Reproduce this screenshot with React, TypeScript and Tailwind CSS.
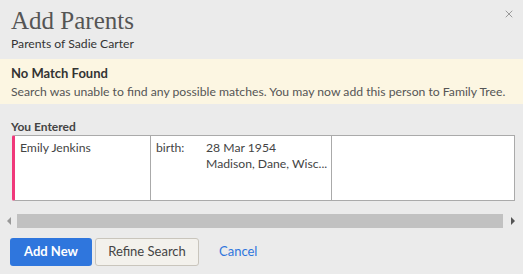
import { X } from 'lucide-react';

const sans = { fontFamily: 'Lato, "Liberation Sans", sans-serif' };

export default function App() {
  return (
    <div className="relative h-[274px] w-[523px] overflow-hidden bg-[#ebebeb] text-[#333]" style={sans}>
      {/* Header */}
      <div className="px-[11px] pt-[6px]">
        <h1 className="text-[25px] leading-[30px] text-[#555]" style={{ fontFamily: '"Liberation Serif", serif' }}>
          Add Parents
        </h1>
        <p className="text-[12.2px] leading-[15px] text-[#333]">Parents of Sadie Carter</p>
      </div>
      <button className="absolute right-[8px] top-[8px] text-[#999]" aria-label="Close">
        <X className="h-[12px] w-[12px]" strokeWidth={2} />
      </button>

      {/* No match banner */}
      <div className="mt-[8px] h-[45px] bg-[#fcf6e2] px-[11px] pt-[6px]">
        <div className="text-[13px] font-bold leading-[16px] text-[#333]">No Match Found</div>
        <div className="mt-[3px] text-[12.2px] leading-[15px] text-[#555]">
          Search was unable to find any possible matches. You may now add this person to Family Tree.
        </div>
      </div>

      {/* You entered */}
      <div className="mt-[15px] px-[11px] text-[12px] font-bold leading-[15px] text-[#444]">You Entered</div>
      <div className="mt-[1px] ml-[12px] flex h-[66px] w-[503px] text-[12.2px] leading-[16px] text-[#444]">
        <div className="w-[138px] rounded-l-[2px] border-y border-l-[3px] border-[#aaa] border-l-[#f0387a] bg-white px-[5px] pt-[4px]">
          Emily Jenkins
        </div>
        <div className="flex w-[181px] border border-r-0 border-[#aaa] bg-white px-[5px] pt-[4px]">
          <span className="w-[50px] shrink-0">birth:</span>
          <div className="whitespace-nowrap">
            <div>28 Mar 1954</div>
            <div>Madison, Dane, Wisc...</div>
          </div>
        </div>
        <div className="flex-1 border border-[#aaa] bg-white" />
      </div>

      {/* Horizontal scrollbar */}
      <div className="mt-[13px] flex h-[14px] items-center">
        <div className="flex w-[17px] justify-center">
          <span className="h-0 w-0 border-y-[4px] border-r-[4px] border-y-transparent border-r-[#999]" />
        </div>
        <div className="h-[14px] w-[486px] bg-[#c1c1c1]" />
        <div className="flex flex-1 justify-center">
          <span className="h-0 w-0 border-y-[4px] border-l-[4px] border-y-transparent border-l-[#555]" />
        </div>
      </div>

      {/* Actions */}
      <div className="mt-[10px] flex items-center px-[10px]">
        <button className="h-[28px] w-[82px] rounded-[3px] bg-[#2f76dd] text-[13px] font-bold text-white">
          Add New
        </button>
        <button className="ml-[3px] h-[28px] w-[104px] rounded-[3px] border border-[#c9c5bc] bg-[#f3f1ec] text-[13px] text-[#444]">
          Refine Search
        </button>
        <button className="ml-[20px] text-[13px] text-[#2f76dd]">Cancel</button>
      </div>
    </div>
  );
}
